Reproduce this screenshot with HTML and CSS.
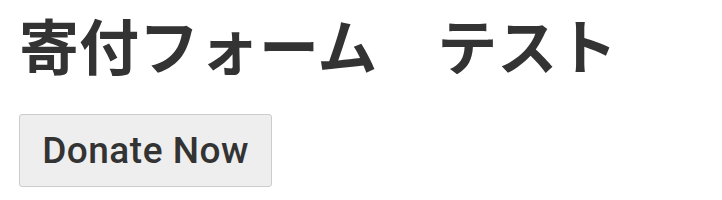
FILE: index.html
```html
<!DOCTYPE html>
<html lang="ja">
  <head>
    <meta charset="UTF-8" />
    <meta name="viewport" content="width=device-width, initial-scale=1.0" />
    <title>寄付フォーム テスト</title>
    <link rel="stylesheet" href="styles.css">
  </head>

  <body>
    <div class="page">
      <h1 class="title">寄付フォーム　テスト</h1>
      <button class="donate-btn" type="button">Donate Now</button>
    </div>
  </body>
</html>
```

FILE: styles.css
```css
* {
  box-sizing: border-box;
  margin: 0;
  padding: 0;
}

body {
  font-family: "Liberation Sans", "Noto Sans CJK JP", sans-serif;
  color: #333;
  background: #fff;
}

.page {
  padding: 0 19px;
}

.title {
  font-family: "Noto Sans CJK JP", sans-serif;
  font-size: 60px;
  font-weight: bold;
  line-height: 87px;
  margin-bottom: 27px;
}

.donate-btn {
  font-family: "Roboto", "Liberation Sans", sans-serif;
  font-size: 37px;
  font-weight: 500;
  letter-spacing: 0.5px;
  color: #333;
  background-color: #eee;
  border: 1px solid #ccc;
  border-radius: 3px;
  width: 253px;
  height: 73px;
}
```
